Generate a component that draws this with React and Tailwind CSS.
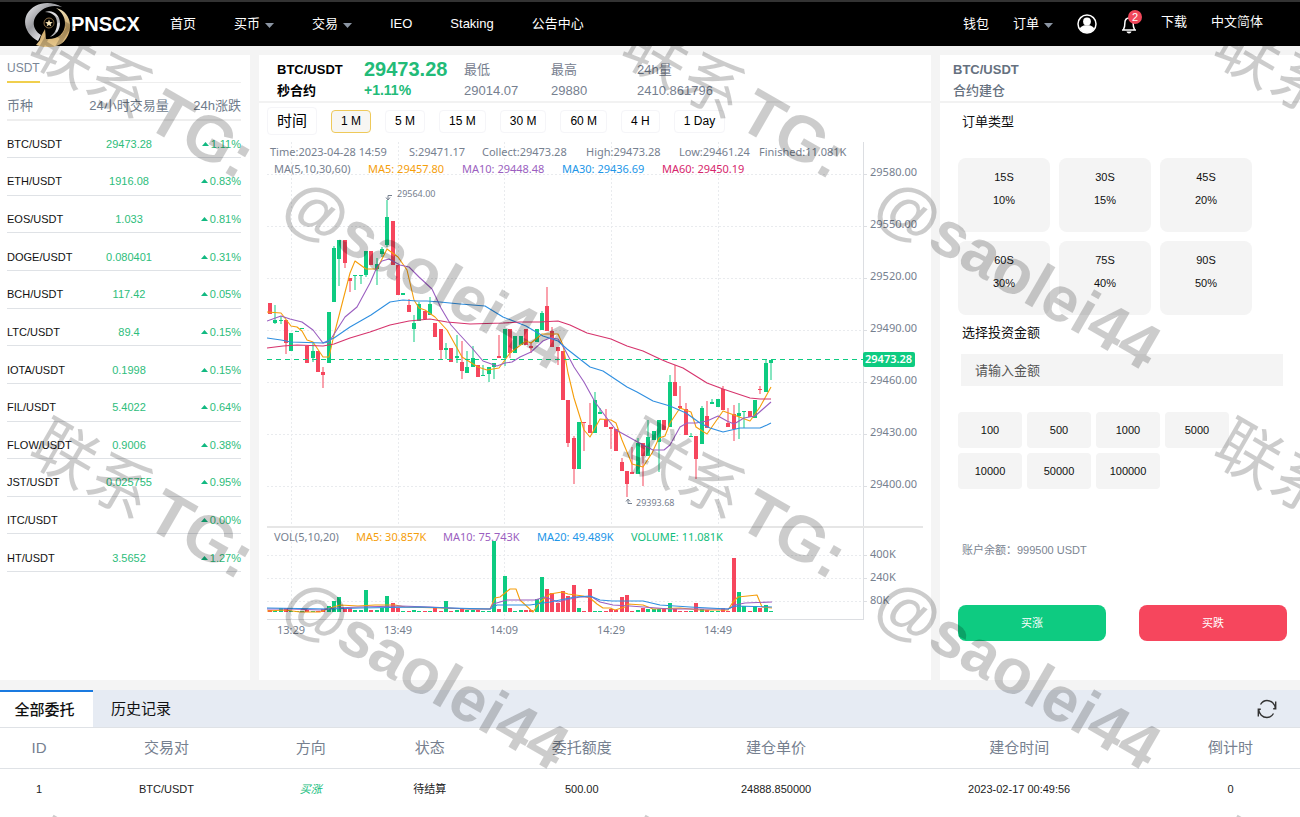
import { useState } from "react";

const pairs = [
    ["BTC/USDT", "29473.28", "1.11%"],
    ["ETH/USDT", "1916.08", "0.83%"],
    ["EOS/USDT", "1.033", "0.81%"],
    ["DOGE/USDT", "0.080401", "0.31%"],
    ["BCH/USDT", "117.42", "0.05%"],
    ["LTC/USDT", "89.4", "0.15%"],
    ["IOTA/USDT", "0.1998", "0.15%"],
    ["FIL/USDT", "5.4022", "0.64%"],
    ["FLOW/USDT", "0.9006", "0.38%"],
    ["JST/USDT", "0.025755", "0.95%"],
    ["ITC/USDT", "", "0.00%"],
    ["HT/USDT", "3.5652", "1.27%"],
];

const stats = [
    ["最低", "29014.07"],
    ["最高", "29880"],
    ["24h量", "2410.861796"],
];

const periods = ["1 M", "5 M", "15 M", "30 M", "60 M", "4 H", "1 Day"];

const durations = [
    ["15S", "10%"],
    ["30S", "15%"],
    ["45S", "20%"],
    ["60S", "30%"],
    ["75S", "40%"],
    ["90S", "50%"],
];

const amounts = [100, 500, 1000, 5000, 10000, 50000, 100000];

const GREEN = "#0ecb81";
const RED = "#f6465d";

// [up, high, body top, body bottom, low, volume]
const candles = [
    [0, 303, 303, 314, 314, 2], [1, 305, 320, 323, 324, 1], [1, 316, 320, 321, 324, 4], [0, 320, 320, 343, 354, 4],
    [1, 333, 333, 351, 351, 1], [1, 331, 331, 332, 332, 1], [1, 328, 328, 329, 329, 1], [0, 346, 346, 363, 363, 2],
    [1, 342, 351, 358, 362, 1], [0, 351, 351, 372, 372, 1], [0, 367, 372, 375, 388, 3], [1, 312, 312, 363, 363, 6],
    [1, 246, 248, 302, 302, 11], [1, 240, 240, 259, 286, 15], [0, 240, 240, 263, 268, 4], [0, 278, 278, 281, 292, 4],
    [1, 275, 275, 276, 290, 2], [1, 275, 275, 276, 284, 2], [1, 251, 251, 275, 277, 22], [0, 251, 251, 265, 265, 2],
    [1, 258, 264, 269, 285, 2], [1, 247, 249, 254, 257, 4], [1, 200, 217, 245, 247, 16], [0, 221, 221, 265, 265, 9],
    [0, 265, 265, 295, 295, 4], [1, 293, 293, 295, 295, 1], [0, 299, 305, 312, 312, 1], [1, 315, 323, 329, 342, 2],
    [1, 302, 304, 321, 321, 1], [0, 311, 311, 319, 319, 1], [1, 297, 304, 315, 315, 1], [0, 323, 323, 337, 337, 4],
    [0, 329, 329, 350, 359, 1], [1, 343, 348, 350, 359, 11], [0, 348, 348, 362, 362, 1], [1, 335, 356, 358, 363, 2],
    [0, 341, 362, 371, 379, 3], [1, 351, 367, 373, 373, 2], [1, 346, 358, 367, 367, 2], [0, 365, 365, 377, 377, 2],
    [1, 365, 375, 376, 376, 1], [1, 367, 367, 374, 382, 1], [1, 363, 363, 367, 379, 71], [0, 335, 356, 358, 358, 3],
    [1, 329, 329, 358, 366, 36], [0, 329, 329, 353, 358, 4], [1, 336, 336, 353, 353, 1], [1, 336, 336, 345, 345, 2],
    [0, 329, 329, 345, 345, 2], [0, 343, 346, 348, 353, 2], [1, 329, 329, 342, 342, 13], [1, 311, 313, 330, 330, 35],
    [0, 287, 306, 331, 331, 23], [0, 327, 331, 347, 347, 19], [0, 347, 347, 351, 365, 9], [0, 351, 351, 400, 400, 21],
    [0, 400, 400, 443, 447, 16], [0, 436, 438, 469, 484, 27], [1, 422, 422, 469, 469, 4], [0, 422, 422, 423, 451, 1],
    [0, 403, 425, 433, 433, 23], [1, 392, 400, 433, 433, 1], [1, 408, 412, 414, 414, 1], [0, 409, 419, 427, 427, 1],
    [0, 427, 427, 429, 449, 3], [0, 429, 429, 451, 451, 2], [0, 458, 462, 471, 471, 15], [0, 471, 471, 484, 497, 17],
    [0, 447, 472, 474, 474, 1], [1, 438, 443, 474, 474, 2], [0, 443, 443, 456, 486, 4], [1, 420, 437, 456, 456, 3],
    [1, 431, 431, 440, 440, 3], [1, 420, 420, 442, 472, 3], [0, 420, 420, 430, 430, 3], [1, 375, 382, 427, 427, 9],
    [0, 365, 382, 396, 396, 3], [0, 386, 406, 408, 409, 1], [0, 403, 409, 435, 435, 1], [1, 433, 436, 437, 437, 1],
    [0, 436, 436, 459, 479, 9], [1, 406, 408, 444, 444, 3], [0, 401, 416, 428, 428, 2], [1, 399, 402, 404, 404, 1],
    [1, 399, 399, 407, 407, 1], [0, 386, 389, 410, 410, 4], [0, 408, 423, 427, 427, 1], [0, 405, 414, 429, 441, 54],
    [1, 403, 413, 416, 439, 20], [1, 411, 411, 412, 428, 6], [0, 411, 411, 417, 417, 1], [1, 400, 400, 418, 418, 6],
    [0, 386, 389, 390, 394, 4], [1, 359, 363, 392, 392, 7], [1, 360, 360, 363, 380, 1],
];

const priceLines = [
    ["#f59e0b", "267,312 281,313 291,326 297,327 302,331 307,340 313,342 323,357 329,357 334,335 350,273 355,261 366,269 377,269 387,249 398,257 407,270 414,300 419,308 425,310 435,317 447,330 462,357 470,362 478,367 487,370 499,368 510,353 526,341 531,343 542,334 558,334 563,345 568,373 574,398 584,430 590,437 600,419 611,420 616,423 622,440 632,464 643,467 652,453 659,438 665,436 670,423 680,408 691,412 696,427 707,434 723,411 734,415 750,421 760,407 771,387"],
    ["#9b5fc0", "267,321 281,316 290,319 302,322 313,330 323,343 329,342 345,317 357,307 370,283 377,267 382,261 389,259 400,265 409,267 419,277 432,289 441,308 451,325 460,335 472,348 483,361 497,366 505,363 512,362 520,357 531,352 543,341 550,338 558,339 564,348 574,367 584,382 595,402 606,417 616,430 627,436 643,445 653,450 664,450 670,445 680,427 687,423 696,423 707,421 718,416 727,421 734,424 744,418 755,416 763,409 771,402"],
    ["#2f8fe0", "267,338 281,340 291,342 323,343 334,338 350,327 371,315 390,302 403,300 417,301 427,301 440,302 460,304 485,306 503,317 526,326 543,336 558,341 567,349 590,367 603,371 627,387 637,392 653,401 670,406 686,413 700,423 710,428 723,432 740,428 760,428 767,425 771,423"],
    ["#d6336c", "267,348 283,346 297,345 323,346 334,344 350,338 370,332 390,325 409,321 430,319 447,322 470,324 503,323 520,322 540,322 558,321 570,325 587,333 611,339 627,346 643,351 660,359 667,362 683,368 707,383 723,389 750,398 760,399 771,399"],
];

const volumeLines = [
    ["#f59e0b", "267,611 285,610 300,612 320,612 327,609 340,605 358,606 375,605 395,605 405,607 440,608 470,609 490,609 495,598 500,597 510,589 516,589 520,600 533,612 540,602 550,594 562,592 568,594 583,596 590,598 597,604 603,608 610,608 615,610 625,607 628,604 643,605 653,609 680,608 700,610 728,610 733,602 738,597 757,595 762,607 772,608"],
    ["#9b5fc0", "267,609 290,609 320,610 335,608 360,607 400,606 430,607 470,609 490,609 493,604 500,602 507,600 535,600 545,597 558,602 565,600 580,597 592,597 600,602 613,605 630,606 670,609 728,609 735,605 745,603 772,602"],
    ["#2f8fe0", "267,608 330,609 360,608 420,607 450,608 490,609 497,605 530,605 550,602 560,600 575,597 590,596 600,600 612,601 643,601 660,605 690,607 728,609 735,606 772,607"],
];

const priceTicks = ["29580.00", "29550.00", "29520.00", "29490.00", "29460.00", "29430.00", "29400.00"];
const volumeTicks = ["400K", "240K", "80K"];
const timeTicks = ["13:29", "13:49", "14:09", "14:29", "14:49"];

// [x, baseline, color, text]
const legend = [
    [270, 156, "#76808f", "Time:2023-04-28 14:59"],
    [409, 156, "#76808f", "S:29471.17"],
    [482, 156, "#76808f", "Collect:29473.28"],
    [586, 156, "#76808f", "High:29473.28"],
    [679, 156, "#76808f", "Low:29461.24"],
    [759, 156, "#76808f", "Finished:11.081K"],
    [274, 173, "#76808f", "MA(5,10,30,60)"],
    [368, 173, "#f59e0b", "MA5: 29457.80"],
    [462, 173, "#9b5fc0", "MA10: 29448.48"],
    [562, 173, "#2196e8", "MA30: 29436.69"],
    [662, 173, "#d6266c", "MA60: 29450.19"],
    [274, 541, "#76808f", "VOL(5,10,20)"],
    [356, 541, "#f59e0b", "MA5: 30.857K"],
    [443, 541, "#9b5fc0", "MA10: 75.743K"],
    [537, 541, "#2196e8", "MA20: 49.489K"],
    [631, 541, "#12bd7c", "VOLUME: 11.081K"],
];

const Caret = () => (
    <svg viewBox="0 0 9 5" className="w-[9px] h-[5px] mt-[3px]" fill="#8b95a3">
        <path d="M0 0h9L4.5 5z" />
    </svg>
);

const Logo = () => (
    <svg viewBox="24 0 47 46" className="w-[47px] h-[46px]">
        <defs>
            <linearGradient id="silver" x1="0" y1="0" x2="1" y2="1">
                <stop offset="0" stopColor="#f2f2f4" />
                <stop offset="0.4" stopColor="#9b9ca1" />
                <stop offset="0.7" stopColor="#e9e9ec" />
                <stop offset="1" stopColor="#8a8b90" />
            </linearGradient>
            <linearGradient id="gold" x1="0" y1="0" x2="0" y2="1">
                <stop offset="0" stopColor="#f3e4bd" />
                <stop offset="0.5" stopColor="#c9a566" />
                <stop offset="1" stopColor="#e8c98e" />
            </linearGradient>
        </defs>
        <path d="M62 6C50-1 34 1 27 13c-5 10 0 21 11 27l3-6C33 29 32 21 36 15 42 6 52 3 62 6Z" fill="url(#silver)" />
        <path d="M45 11c8-3 15 3 15 11 0 7-4 12-10 14 5-4 7-8 7-14 0-7-5-11-12-11Z" fill="#dcdce0" />
        <path d="M56 7c9 2 15 10 14 20-1 11-9 19-20 19-6 1-10-1-14-2l4-5c1-5 3-7 5-11l1 10c11 1 19-5 19-15 0-7-3-12-9-16Z" fill="url(#gold)" />
        <circle cx="49" cy="22" r="5" fill="#000" stroke="#8f6f45" strokeWidth="1" />
        <path d="m49 18.500 1 2.500 2.800.200-2.200 1.700.8 2.700-2.400-1.500-2.400 1.500.8-2.700-2.200-1.700L48 21z" fill="#f7e3b4" />
    </svg>
);

const Header = () => (
    <header className="flex items-center justify-between h-[46px] border-t-2 border-[#333] bg-black pl-6 pr-[37px] text-[13px] leading-4 text-white">
        <div className="flex items-center">
            <a href="#" className="flex items-center h-11 text-[20px] leading-6 font-bold">
                <Logo />
                PNSCX
            </a>
            <nav className="flex items-center gap-[38px] ml-[30px]">
                <a href="#">首页</a>
                <a href="#" className="flex items-center gap-[5px]">买币<Caret /></a>
                <a href="#" className="flex items-center gap-[5px]">交易<Caret /></a>
                <a href="#">IEO</a>
                <a href="#">Staking</a>
                <a href="#">公告中心</a>
            </nav>
        </div>
        <div className="flex items-center gap-6">
            <a href="#">钱包</a>
            <a href="#" className="flex items-center gap-[5px]">订单<Caret /></a>
            <button aria-label="account">
                <svg viewBox="0 0 20 20" className="w-5 h-5">
                    <circle cx="10" cy="10" r="9" fill="none" stroke="#fff" strokeWidth="1.5" />
                    <circle cx="10" cy="7.5" r="3.9" fill="#fff" />
                    <path d="M2.8 14.4c1.2-2.2 3.4-2.9 5.2-3.2h4c1.8.3 4 1 5.2 3.2C15.500 17.200 13 18.700 10 18.700s-5.500-1.500-7.200-4.300Z" fill="#fff" />
                </svg>
            </button>
            <button aria-label="messages" className="relative">
                <svg viewBox="0 0 16 20" className="w-4 h-5" fill="none" stroke="#fff" strokeWidth="1.5">
                    <path d="M1 16h14M2.800 16v-1.500c.8-1 1-2 1-5C3.800 5.800 5.500 4 8 4s4.200 1.800 4.200 5.500c0 3 .2 4 1 5V16" />
                    <path d="M5.500 17.500h5c-.5 2.500-4.500 2.500-5 0Z" fill="#fff" stroke="none" />
                </svg>
                <span className="absolute -top-1 left-[7px] w-[14px] h-[14px] rounded-full bg-[#f0475a] text-[11px] leading-[14px] text-center">2</span>
            </button>
            <div className="flex items-center gap-6 pb-1">
                <a href="#">下载</a>
                <a href="#">中文简体</a>
            </div>
        </div>
    </header>
);

const Market = () => (
    <section className="bg-white pl-[7px] pr-[9px]">
        <div className="flex h-7 border-b border-[#eee]">
            <button className="-mb-px border-b-2 border-[#f0cf4d] text-[12px] leading-4 text-[#7a8696]">USDT</button>
        </div>
        <table className="w-full h-[489px] table-fixed border-collapse text-[11px] leading-4">
            <thead>
                <tr className="h-[37px] border-b-2 border-[#eee] text-[13px] text-[#6f7c8c]">
                    <th className="w-[70px] pt-[10px] font-normal text-left">币种</th>
                    <th className="pt-[10px] font-normal whitespace-nowrap">24小时交易量</th>
                    <th className="w-[60px] pt-[10px] font-normal text-right whitespace-nowrap">24h涨跌</th>
                </tr>
            </thead>
            <tbody>
                {pairs.map(([name, price, change]) => (
                    <tr key={name} className="h-[37px] border-b border-[#dfe2e6]">
                        <td className="pt-[10px] whitespace-nowrap text-[#111]">{name}</td>
                        <td className="pt-[10px] text-center text-[#2dbd7b]">{price}</td>
                        <td className="pt-[10px] text-[#2dbd7b]">
                            <span className="flex items-center justify-end gap-[2px]">
                                <svg viewBox="0 0 7 4" className="w-[7px] h-1" fill="#12b981">
                                    <path d="M0 4h7L3.5 0z" />
                                </svg>
                                {change}
                            </span>
                        </td>
                    </tr>
                ))}
            </tbody>
        </table>
    </section>
);

const Chart = () => (
    <svg viewBox="267 142 656 498" className="w-full h-auto font-['Noto_Sans','Open_Sans',sans-serif]" fontSize="11">
        <g stroke="#e9ebee" strokeDasharray="2 2">
            {priceTicks.map((t, i) => <path key={t} d={`M267 ${174.5 + i * 52}H863`} />)}
            {volumeTicks.map((t, i) => <path key={t} d={`M267 ${555.5 + i * 23}H863`} />)}
            {timeTicks.map((t, i) => <path key={t} d={`M${Math.round(291 + i * 106.67) + 0.5} 142V619`} />)}
        </g>
        <path d="M863.5 142V619.5M267 619.5H864" stroke="#dcdee2" fill="none" />
        <path d="M267 527H923" stroke="#e6e6e6" strokeWidth="2" />

        {candles.map(([up, high, top, bottom, low, volume], i) => {
            const x = Math.round(270 + i * 5.33);
            return (
                <g key={i} fill={up ? GREEN : RED}>
                    <rect x={x - 0.5} y={high} width="1" height={low - high} />
                    <rect x={x - 2} y={top} width="4" height={bottom - top} />
                    <rect x={x - 2} y={612 - volume} width="4" height={volume} />
                </g>
            );
        })}
        {[...priceLines, ...volumeLines].map(([color, points], i) => (
            <polyline key={i} points={points} fill="none" stroke={color} strokeWidth="1.1" strokeLinejoin="round" />
        ))}

        {legend.map(([x, y, color, text]) => (
            <text key={text} x={x} y={y} fill={color}>{text}</text>
        ))}
        <g fill="#76808f">
            {priceTicks.map((t, i) => (
                <g key={t}>
                    <path d={`M863 ${174.5 + i * 52}h4`} stroke="#dcdee2" />
                    <text x="870" y={176 + i * 52}>{t}</text>
                </g>
            ))}
            {volumeTicks.map((t, i) => (
                <g key={t}>
                    <path d={`M863 ${555.5 + i * 23}h4`} stroke="#dcdee2" />
                    <text x="870" y={558 + i * 23}>{t}</text>
                </g>
            ))}
            {timeTicks.map((t, i) => (
                <text key={t} x={Math.round(291 + i * 106.67)} y="634" textAnchor="middle">{t}</text>
            ))}
            <g fontSize="9">
                <text x="397" y="197">29564.00</text>
                <text x="636" y="506">29393.68</text>
            </g>
            <path d="M392 195.5h-4v4M386 197.5l2 2.5 2-2.5M632 503.5h-4v-4M626 501.5l2-2.5 2 2.5" fill="none" stroke="#76808f" />
        </g>

        <path d="M267 359.5H863" stroke={GREEN} strokeDasharray="5 4" />
        <rect x="863" y="352" width="52" height="15" rx="2" fill={GREEN} />
        <text x="865" y="363" fill="#fff" fontWeight="600">29473.28</text>
    </svg>
);

const Trade = () => {
    const [period, setPeriod] = useState("1 M");

    return (
        <section className="bg-white min-w-0">
            <div className="grid grid-cols-[87px_100px_87px_86px_1fr] h-12 pl-[18px] pt-1 border-b-2 border-[#f2f2f2] text-[13px] leading-[21px] text-[#76808f]">
                <div className="font-bold text-black">
                    <p>BTC/USDT</p>
                    <p>秒合约</p>
                </div>
                <div className="font-bold text-[#22bb78]">
                    <p className="text-[20px]">29473.28</p>
                    <p className="text-[14px]">+1.11%</p>
                </div>
                {stats.map(([label, value]) => (
                    <div key={label}>
                        <p>{label}</p>
                        <p>{value}</p>
                    </div>
                ))}
            </div>
            <div className="flex items-center gap-[14px] h-[39px] pl-2 pb-[3px]">
                <span className="h-7 px-[9px] border border-[#f5f5f8] rounded-sm text-[15px] leading-[26px] text-black">时间</span>
                {periods.map(p => (
                    <button
                        key={p}
                        onClick={() => setPeriod(p)}
                        className={`h-[23px] px-[9px] border rounded-sm text-[12px] leading-4 text-black ${p === period ? "border-[#eec95a] bg-[#f7f6f3]" : "border-[#f5f5f8]"}`}
                    >
                        {p}
                    </button>
                ))}
            </div>
            <div className="px-2">
                <Chart />
            </div>
        </section>
    );
};

const OrderForm = () => {
    const [amount, setAmount] = useState("");

    return (
        <section className="bg-white text-[13px] leading-4 text-[#111]">
            <div className="h-12 pl-[13px] pt-1 border-b-2 border-[#f2f2f2] leading-[21px] text-[#66717f]">
                <p className="font-bold">BTC/USDT</p>
                <p className="font-medium">合约建仓</p>
            </div>
            <div className="px-[18px] pt-[11px]">
                <h2 className="pl-1">订单类型</h2>
                <div className="flex flex-wrap gap-[9px] mt-7">
                    {durations.map(([time, rate]) => (
                        <button key={time} className="flex flex-col items-center w-[92px] h-[74px] pt-2 rounded-lg bg-[#f4f4f4] text-[11px] leading-[23px]">
                            <span>{time}</span>
                            <span>{rate}</span>
                        </button>
                    ))}
                </div>
                <label htmlFor="amount" className="block pl-1 mt-[10px]">选择投资金额</label>
                <input
                    id="amount"
                    value={amount}
                    onChange={e => setAmount(e.target.value)}
                    placeholder="请输入金额"
                    className="block w-[calc(100%-2px)] h-8 mt-[13px] ml-[3px] px-[14px] bg-[#f4f4f4] text-[13px] placeholder:text-[#555]"
                />
                <div className="flex flex-wrap gap-[5px] mt-[26px]">
                    {amounts.map(a => (
                        <button key={a} onClick={() => setAmount(String(a))} className="w-16 h-9 rounded-sm bg-[#f4f4f4] text-[11px]">
                            {a}
                        </button>
                    ))}
                </div>
                <p className="pl-1 mt-[53px] text-[11px] text-[#7c8592]">账户余额：999500 USDT</p>
            </div>
            <div className="grid grid-cols-2 gap-[33px] pl-[18px] pr-[13px] mt-[47px] text-[11px] text-white">
                <button className="h-9 rounded-lg bg-[#0ecb81]">买涨</button>
                <button className="h-9 rounded-lg bg-[#f6465d]">买跌</button>
            </div>
        </section>
    );
};

const Orders = () => (
    <section className="bg-white mt-[10px] grow">
        <div className="flex items-center justify-between h-[37px] pr-[23px] bg-[#e6ebf3] text-[15px] leading-4 text-[#111]">
            <div className="flex h-full">
                <button className="w-[93px] pr-1 border-t-2 border-[#1a7ae0] bg-white font-medium">全部委托</button>
                <button className="px-[18px]">历史记录</button>
            </div>
            <button aria-label="refresh">
                <svg viewBox="0 0 20 20" className="w-5 h-5" fill="none" stroke="#333" strokeWidth="1.4">
                    <path d="M3.500 5.500C5 3 7.200 1.500 10 1.500c4.500 0 8 3.500 8.300 8M18.700 2.500v7.200h-2.500M16.500 14.500c-1.500 2.500-3.700 4-6.500 4-4.500 0-8-3.500-8.300-8M1.300 17.500v-7.200h2.500" />
                </svg>
            </button>
        </div>
        <table className="w-full table-fixed border-collapse text-[11px] leading-4 text-[#222]">
            <thead>
                <tr className="h-[41px] border-y border-[#dfe2e6] text-[15px] text-[#76808f]">
                    <th className="w-[6%] font-normal">ID</th>
                    <th className="w-[13.6%] font-normal">交易对</th>
                    <th className="w-[8.6%] font-normal">方向</th>
                    <th className="w-[9.7%] font-normal">状态</th>
                    <th className="w-[13.7%] font-normal">委托额度</th>
                    <th className="w-[16.2%] font-normal">建仓单价</th>
                    <th className="w-[21.2%] font-normal">建仓时间</th>
                    <th className="pl-1 font-normal">倒计时</th>
                </tr>
            </thead>
            <tbody>
                <tr className="h-10 text-center">
                    <td>1</td>
                    <td>BTC/USDT</td>
                    <td className="italic text-[#12bd7c]">买涨</td>
                    <td>待结算</td>
                    <td>500.00</td>
                    <td>24888.850000</td>
                    <td>2023-02-17 00:49:56</td>
                    <td className="pl-1">0</td>
                </tr>
            </tbody>
        </table>
    </section>
);

const Watermark = () => (
    <div aria-hidden="true" className="absolute inset-0 overflow-hidden pointer-events-none">
        <div className="grid grid-cols-[repeat(3,592px)] auto-rows-[400px] text-[64px] leading-[64px] font-bold text-black/20 whitespace-nowrap">
            {Array.from({ length: 9 }, (_, i) => (
                <div key={i} className="relative">
                    <span className="absolute left-5 top-[68px] rotate-30"><span className="mr-2 font-normal">联系</span>TG:</span>
                    <span className="absolute left-[269px] top-[242px] rotate-30">@saolei44</span>
                </div>
            ))}
        </div>
    </div>
);

const App = () => {
    return (
        <div className="relative flex flex-col min-h-screen overflow-hidden bg-[#f4f4f4] font-['Liberation_Sans','Noto_Sans_CJK_SC',sans-serif]">
            <Header />
            <main className="grid grid-cols-[250px_1fr_360px] gap-[9px] min-h-[625px] mt-[9px]">
                <Market />
                <Trade />
                <OrderForm />
            </main>
            <Orders />
            <Watermark />
        </div>
    );
};

export default App;
